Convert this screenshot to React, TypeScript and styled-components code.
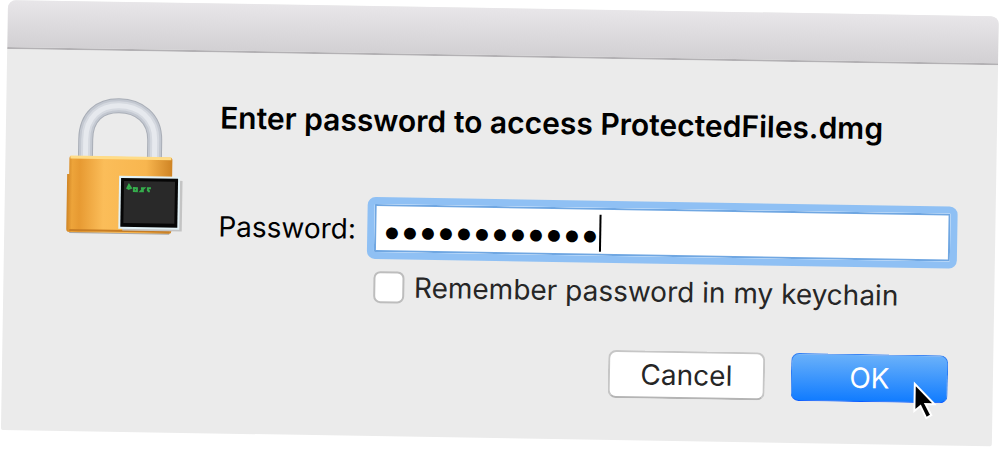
import React, { useState } from "react";
import styled, { createGlobalStyle } from "styled-components";

const GlobalStyle = createGlobalStyle`
  *, *::before, *::after { box-sizing: border-box; }
  body {
    margin: 0;
    min-height: 100vh;
    overflow: hidden;
    background: #fff;
    color: #000;
    font-family: Inter, "Liberation Sans", sans-serif;
    font-size: 28px;
    line-height: 36px;
  }
`;

const Dialog = styled.main`
  position: relative;
  margin: 0 1px 0 8px;
  background: #ebebeb;
  border-radius: 8px 8px 2px 2px;
  transform: rotate(0.94deg);
  transform-origin: top left;
`;

const TitleBar = styled.header`
  height: 49px;
  border-bottom: 2px solid #b3b1b4;
  border-radius: 8px 8px 0 0;
  background: linear-gradient(#e8e6e9, #d2d0d3);
`;

const Content = styled.div`
  display: flex;
  align-items: flex-start;
  gap: 30px;
  padding: 46px 38px 42px 56px;
`;

const LockIcon = styled.svg`
  flex: none;
  width: 128px;
  height: 144px;
`;

const Form = styled.form`
  flex: 1;
  display: grid;
  grid-template-columns: auto 1fr;
  column-gap: 11px;
`;

const Heading = styled.h1`
  grid-column: 1 / -1;
  margin: 0 0 58px;
  font-size: 30px;
  line-height: 38px;
  font-weight: 600;
  white-space: nowrap;
`;

const Label = styled.label`
  align-self: center;
  padding-top: 2px;
`;

const Field = styled.div`
  position: relative;
`;

const PasswordInput = styled.input`
  display: block;
  width: 100%;
  height: 62px;
  padding: 4px 9px 0;
  border: 7px solid #8fc0f4;
  border-radius: 8px;
  outline: none;
  background: #fff;
  box-shadow: inset 0 0 0 2px #70a7e2;
  color: #000;
  caret-color: transparent;
  font-family: Inter, sans-serif;
  font-size: 38px;
  font-weight: 700;
`;

const Caret = styled.span`
  position: absolute;
  left: 232px;
  top: 14px;
  width: 2px;
  height: 37px;
  background: #000;
`;

const Remember = styled.label`
  grid-column: 2;
  display: flex;
  align-items: center;
  gap: 10px;
  margin: 10px 0 0 7px;
  color: #262626;
  white-space: nowrap;
`;

const Checkbox = styled.input`
  appearance: none;
  flex: none;
  width: 31px;
  height: 32px;
  margin: 0;
  border: 2px solid #bdbdbd;
  border-radius: 7px;
  background: #fff;
`;

const Actions = styled.div`
  grid-column: 1 / -1;
  display: flex;
  justify-content: flex-end;
  gap: 26px;
  margin: 41px 7px 0 0;
`;

const Button = styled.button<{ $primary?: boolean }>`
  width: 157px;
  height: 48px;
  padding: 0;
  border: ${(p) => (p.$primary ? "1px solid #2b7cf5" : "2px solid #c6c6c6")};
  border-bottom-color: ${(p) => (p.$primary ? "#0a5cff" : "#b4b4b4")};
  border-radius: 8px;
  background: ${(p) => (p.$primary ? "linear-gradient(#6ab1fa, #117cff)" : "#fff")};
  color: ${(p) => (p.$primary ? "#fff" : "#262626")};
  font-family: inherit;
  font-size: 28px;
`;

const Pointer = styled.svg`
  position: absolute;
  right: 56px;
  bottom: 24px;
  width: 26px;
  height: 40px;
`;

function Padlock() {
  return (
    <LockIcon viewBox="0 0 128 144" aria-hidden="true">
      <defs>
        <linearGradient id="brass" x1="0" x2="1">
          <stop offset="0" stopColor="#cf8424" />
          <stop offset="0.05" stopColor="#eda43a" />
          <stop offset="0.12" stopColor="#e79a32" />
          <stop offset="0.35" stopColor="#fbbd59" />
          <stop offset="0.75" stopColor="#f8b64f" />
          <stop offset="1" stopColor="#cf8424" />
        </linearGradient>
      </defs>
      <path d="M24 62V43C24 20 38 9 57 9s36 11 36 34v19" fill="none" stroke="#a9aeb7" strokeWidth="15" />
      <path d="M24 62V43C24 20 38 9 57 9s36 11 36 34v19" fill="none" stroke="#c3c8d1" strokeWidth="13" />
      <path d="M24 62V43C24 20 38 9 57 9s36 11 36 34v19" fill="none" stroke="#d5d9e0" strokeWidth="9" />
      <path d="M24 62V43C24 20 38 9 57 9s36 11 36 34v19" fill="none" stroke="#e6e9ee" strokeWidth="5" />
      <path d="M9 135h100" stroke="#a8a8a8" strokeWidth="4" />
      <path d="M8 62q0-2 2-2h99q2 0 2 2v72q0 2-2 2H9q-3 0-3-3V78h2z" fill="url(#brass)" />
      <path d="M9 61h101" stroke="#ffdc87" strokeWidth="3" />
      <path d="M9 134h100" stroke="#c77d24" strokeWidth="2" />
      <path d="M62 132h58V83" fill="none" stroke="#c4c4c4" strokeWidth="3" />
      <rect x="58" y="79" width="61" height="53" fill="#e2f2f7" />
      <rect x="60" y="81" width="57" height="49" fill="#060606" />
      <rect x="63" y="84" width="51" height="42" fill="#292929" />
      <path d="M66 92l2-4 2 3-3 1M73 91h3v3h-3zM80 91h3l-3 3h3M87 94v-3h3M87 94h2" fill="none" stroke="#35ad4c" strokeWidth="2" />
    </LockIcon>
  );
}

export default function App() {
  const [password, setPassword] = useState("protectedpwd");
  return (
    <>
      <GlobalStyle />
      <Dialog>
        <TitleBar />
        <Content>
          <Padlock />
          <Form onSubmit={(e: React.FormEvent) => e.preventDefault()}>
            <Heading>Enter password to access ProtectedFiles.dmg</Heading>
            <Label htmlFor="password">Password:</Label>
            <Field>
              <PasswordInput
                id="password"
                type="password"
                value={password}
                onChange={(e) => setPassword(e.target.value)}
              />
              <Caret />
            </Field>
            <Remember>
              <Checkbox type="checkbox" />
              Remember password in my keychain
            </Remember>
            <Actions>
              <Button type="button">Cancel</Button>
              <Button type="submit" $primary>OK</Button>
            </Actions>
          </Form>
        </Content>
        <Pointer viewBox="0 0 26 40" aria-hidden="true">
          <path d="M4 3v27l6-5 6 12 5-3-6-11h9z" fill="#000" stroke="#fff" strokeWidth="2" />
        </Pointer>
      </Dialog>
    </>
  );
}
